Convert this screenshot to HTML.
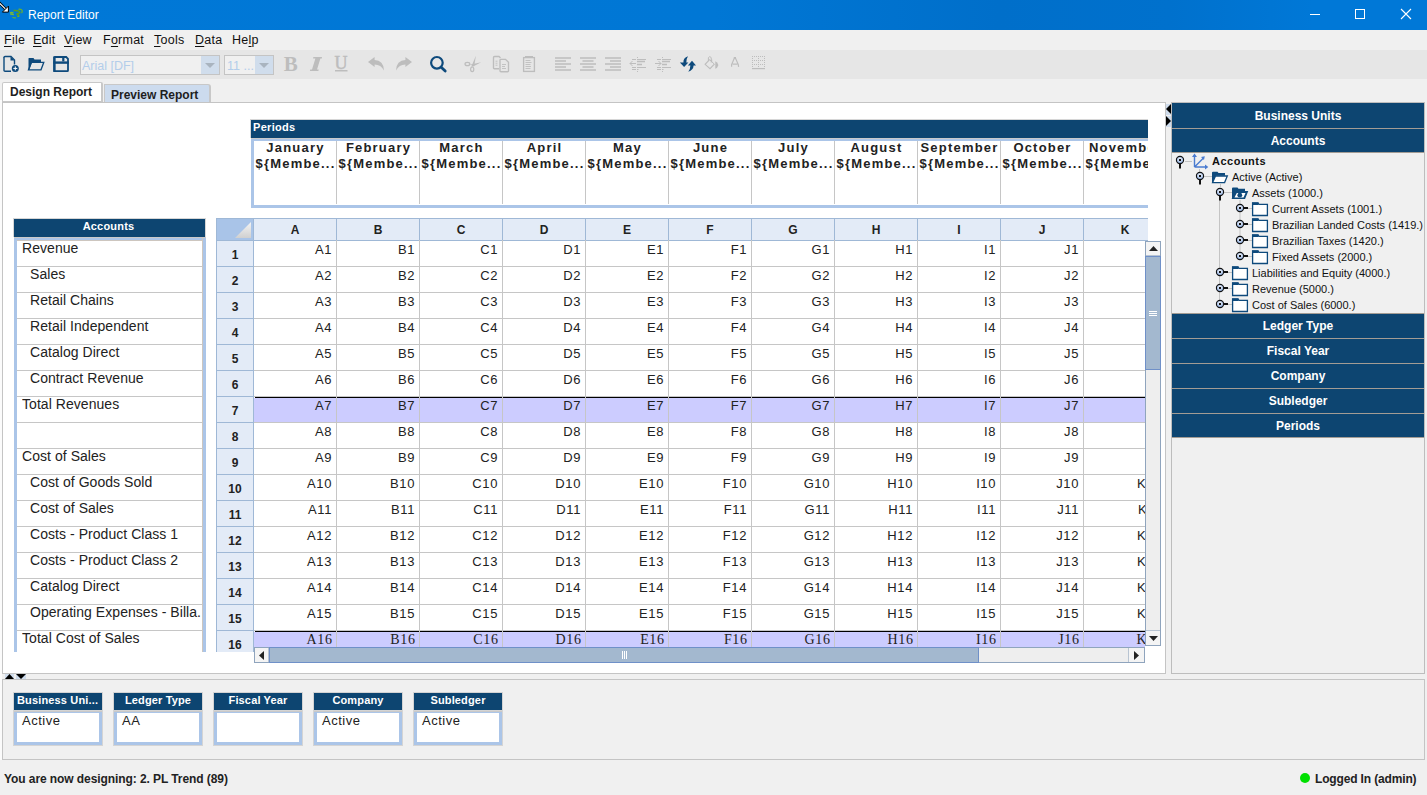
<!DOCTYPE html><html><head><meta charset="utf-8"><title>Report Editor</title><style>
*{margin:0;padding:0;box-sizing:border-box}
html,body{width:1427px;height:795px;overflow:hidden;background:#f0f0f0;font-family:"Liberation Sans",sans-serif;position:relative}
div{position:absolute}
.t{white-space:nowrap;line-height:15px;color:#222}
.clip{overflow:hidden}
u{text-decoration:underline;text-decoration-thickness:1px;text-underline-offset:2px}
</style></head><body><div style="position:absolute;left:0px;top:0px;width:1427px;height:30px;background:linear-gradient(90deg,#0078d7 0%,#0077d5 50%,#006fca 70%,#0071cd 82%,#0078d7 92%)"></div>
<div class="t" style="left:28px;top:8px;font-size:12px;color:#fff;line-height:14px">Report Editor</div>
<svg style="position:absolute;left:9px;top:8px" width="15" height="12" viewBox="0 0 15 12">
<path d="M9.5 1.3 Q13 0.8 13.2 3 Q13.3 4.5 12.5 5" fill="none" stroke="#6ab42a" stroke-width="1.2"/>
<path d="M4.5 2.6 Q8 2 10.5 3.6 Q11.5 4.6 9.5 5.6 L7.5 6 Q10 6.6 8.8 8.6" fill="none" stroke="#5c9e1e" stroke-width="1.6"/>
<path d="M1 4.8 Q3 4.2 4.5 5 M1.2 6 L5 6.6" fill="none" stroke="#78b83a" stroke-width="1.4"/>
<path d="M3.5 9.2 Q5 10.2 6.8 9.6 M8.5 8.8 L10.5 7.8" fill="none" stroke="#6ab42a" stroke-width="1.2"/>
</svg>
<svg style="position:absolute;left:0px;top:0px" width="12" height="14" viewBox="0 0 12 14">
<path d="M-1 2.6 L5.6 9.2" stroke="#000" stroke-width="2.8"/>
<path d="M-1 2.6 L5.6 9.2" stroke="#fff" stroke-width="1.1"/>
<path d="M8.4 6.1 L8.4 12.1 L2.4 12.1 Z" fill="#fff" stroke="#000" stroke-width="1.0" stroke-linejoin="round"/>
</svg>
<div style="position:absolute;left:1310px;top:14px;width:10px;height:1px;background:#fff"></div>
<div style="position:absolute;left:1355px;top:9px;width:10px;height:10px;border:1px solid #fff"></div>
<svg style="position:absolute;left:1400px;top:8px" width="12" height="12" viewBox="0 0 12 12">
<path d="M1 1 L11 11 M11 1 L1 11" stroke="#fff" stroke-width="1.1"/></svg>
<div class="t" style="left:4px;top:33px;font-size:12.5px;letter-spacing:0.25px;color:#111;line-height:14px"><u>F</u>ile</div>
<div class="t" style="left:33px;top:33px;font-size:12.5px;letter-spacing:0.25px;color:#111;line-height:14px"><u>E</u>dit</div>
<div class="t" style="left:64px;top:33px;font-size:12.5px;letter-spacing:0.25px;color:#111;line-height:14px"><u>V</u>iew</div>
<div class="t" style="left:103px;top:33px;font-size:12.5px;letter-spacing:0.25px;color:#111;line-height:14px">F<u>o</u>rmat</div>
<div class="t" style="left:154px;top:33px;font-size:12.5px;letter-spacing:0.25px;color:#111;line-height:14px"><u>T</u>ools</div>
<div class="t" style="left:195px;top:33px;font-size:12.5px;letter-spacing:0.25px;color:#111;line-height:14px"><u>D</u>ata</div>
<div class="t" style="left:232px;top:33px;font-size:12.5px;letter-spacing:0.25px;color:#111;line-height:14px">He<u>l</u>p</div>
<div style="position:absolute;left:0px;top:50px;width:1427px;height:29px;background:#e6e6e6"></div>
<div style="position:absolute;left:80px;top:55px;width:140px;height:20px;background:#f0f0f0;border:1px solid #c4c4c4"></div>
<div style="position:absolute;left:201px;top:56px;width:18px;height:18px;background:#d0ddec"></div>
<svg style="position:absolute;left:205px;top:63px" width="10" height="6"><path d="M0 0 L10 0 L5 5 Z" fill="#a9b4bf"/></svg>
<div class="t" style="left:82px;top:59px;font-size:12.5px;color:#b3cdea">Arial [DF]</div>
<div style="position:absolute;left:224px;top:55px;width:50px;height:20px;background:#f0f0f0;border:1px solid #c4c4c4"></div>
<div style="position:absolute;left:255px;top:56px;width:18px;height:18px;background:#d0ddec"></div>
<svg style="position:absolute;left:259px;top:63px" width="10" height="6"><path d="M0 0 L10 0 L5 5 Z" fill="#a9b4bf"/></svg>
<div class="t" style="left:227px;top:59px;font-size:12.5px;color:#b3cdea">11 ...</div>
<svg style="position:absolute;left:0;top:50px" width="780" height="29" viewBox="0 50 780 29">
<!-- new doc -->
<path d="M4 57.5 Q4 56.5 5 56.5 L11 56.5 L14.5 60 L14.5 64.5" fill="none" stroke="#0e4a7c" stroke-width="1.4"/>
<path d="M4 57 L4 70.5 Q4 71.2 5 71.2 L11 71.2" fill="none" stroke="#0e4a7c" stroke-width="1.4"/>
<path d="M10.5 56.5 L10.5 60.5 L14.5 60.5 Z" fill="#0e4a7c"/>
<circle cx="15.3" cy="68.4" r="3.5" fill="#0e4a7c"/>
<path d="M15.3 66.4 L15.3 70.4 M13.3 68.4 L17.3 68.4" stroke="#fff" stroke-width="1"/>
<!-- open folder -->
<path d="M28.5 58.5 Q28.5 58 29 58 L33.5 58 L34.5 59.5 L41 59.5 L41 62 L32 62 L29.5 69.5 L28.5 69.5 Z" fill="#0e4a7c"/>
<path d="M28.5 69.8 L31.5 62.3 L43.8 62.3 L41 69.8 Z" fill="none" stroke="#0e4a7c" stroke-width="1.3"/>
<!-- save -->
<path d="M54.2 57.6 Q54.2 57 54.8 57 L66.2 57 L68 58.8 L68 70.6 Q68 71.2 67.4 71.2 L54.8 71.2 Q54.2 71.2 54.2 70.6 Z" fill="none" stroke="#0e4a7c" stroke-width="1.8"/>
<rect x="53.3" y="56.5" width="2.3" height="15.5" fill="#0e4a7c"/>
<rect x="53.3" y="61.4" width="15.6" height="2.4" fill="#0e4a7c"/>
<rect x="62.2" y="57" width="2.2" height="4.4" fill="#0e4a7c"/>
<!-- B I U -->
<text x="283.8" y="71" font-family="Liberation Serif" font-weight="bold" font-size="20.5" fill="#bdbdbd" textLength="14" lengthAdjust="spacingAndGlyphs">B</text>
<path d="M313.3 57 L322 57 L321.8 58.6 L320.4 58.6 L317 69.4 L318.7 69.4 L318.4 71 L309.9 71 L310.2 69.4 L312 69.4 L315.4 58.6 L313.1 58.6 Z" fill="#bdbdbd"/>
<text x="334.6" y="69" font-family="Liberation Serif" font-size="18" stroke="#bdbdbd" stroke-width="0.5" fill="#bdbdbd">U</text>
<rect x="335" y="70" width="12.5" height="1.5" fill="#bdbdbd"/>
<!-- undo -->
<path d="M368 62 L374.6 57 L374.6 60 Q383.5 60 384 70.5 Q381 64.5 374.6 64.5 L374.6 67 Z" fill="#bdbdbd"/>
<!-- redo -->
<path d="M412 62 L405.4 57 L405.4 60 Q396.5 60 396 70.5 Q399 64.5 405.4 64.5 L405.4 67 Z" fill="#bdbdbd"/>
<!-- search -->
<circle cx="436.9" cy="62.8" r="5.8" fill="none" stroke="#0e4a7c" stroke-width="2.2"/>
<path d="M441.2 67.2 L445.2 71" stroke="#0e4a7c" stroke-width="2.8" stroke-linecap="round"/>
<!-- cut -->
<ellipse cx="467.4" cy="64" rx="2.4" ry="1.7" fill="none" stroke="#bdbdbd" stroke-width="1.2"/>
<ellipse cx="472.2" cy="69.3" rx="1.6" ry="2.3" fill="none" stroke="#bdbdbd" stroke-width="1.2"/>
<path d="M471.3 66.8 L475.9 55.8 L474.2 66.2 Z" fill="#bdbdbd"/>
<path d="M469.6 64.8 L481.2 62.2 L474.5 65.8 Z" fill="#bdbdbd"/>
<!-- copy -->
<path d="M500.5 58 L499 56.5 L494.5 56.5 Q493.5 56.5 493.5 57.5 L493.5 68 Q493.5 68.7 494.5 68.7 L499 68.7" fill="none" stroke="#bdbdbd" stroke-width="1.35"/>
<path d="M495.5 61.2 L497.5 61.2 M495.5 63.2 L497.5 63.2 M495.5 65.2 L497.5 65.2" stroke="#bdbdbd" stroke-width="0.9"/>
<path d="M500 60 Q500 59.3 501 59.3 L505.5 59.3 L508.5 62.3 L508.5 71 Q508.5 71.7 507.5 71.7 L501 71.7 Q500 71.7 500 71 Z" fill="none" stroke="#bdbdbd" stroke-width="1.35"/>
<path d="M502 64.5 L506 64.5 M502 66.5 L505 66.5 M502 68.5 L506 68.5" stroke="#bdbdbd" stroke-width="0.9"/>
<!-- paste -->
<rect x="523.6" y="57.6" width="10.8" height="13.8" fill="none" stroke="#bdbdbd" stroke-width="1.35"/>
<rect x="525" y="56" width="8" height="2" fill="#bdbdbd"/>
<path d="M525.5 60.5 L530.5 60.5 M525.5 62.5 L531.5 62.5 M525.5 64.5 L530.5 64.5 M525.5 66.5 L531 66.5 M525.5 68.5 L530.5 68.5" stroke="#bdbdbd" stroke-width="0.9"/>
<!-- align left -->
<path d="M555 58 L571 58 M555 61 L566 61 M555 64 L571 64 M555 67 L566 67 M555 70 L571 70" stroke="#bdbdbd" stroke-width="1.6"/>
<!-- align center -->
<path d="M580 58 L596 58 M582.5 61 L593.5 61 M580 64 L596 64 M582.5 67 L593.5 67 M580 70 L596 70" stroke="#bdbdbd" stroke-width="1.6"/>
<!-- align right -->
<path d="M605 58 L621 58 M610 61 L621 61 M605 64 L621 64 M610 67 L621 67 M605 70 L621 70" stroke="#bdbdbd" stroke-width="1.6"/>
<!-- outdent -->
<path d="M632 59.5 L636 59.5 M632 67.5 L636 67.5 M632 69.5 L636 69.5 M637 59.5 L646 59.5 M637 67.5 L646 67.5 M637 69.5 L638.5 69.5" stroke="#bdbdbd" stroke-width="1"/>
<path d="M637 61.5 L645 61.5 M637 64.5 L642 64.5" stroke="#bdbdbd" stroke-width="1.6"/>
<path d="M630 63.5 L636 63.5 M632.5 61 L630 63.5 L632.5 66" fill="none" stroke="#bdbdbd" stroke-width="1"/>
<path d="M637.5 57 L637.5 58 M637.5 71 L637.5 72" stroke="#bdbdbd" stroke-width="1"/>
<!-- indent -->
<path d="M657 59.5 L661 59.5 M657 67.5 L661 67.5 M657 69.5 L661 69.5 M662 59.5 L671 59.5 M662 67.5 L671 67.5 M662 69.5 L663.5 69.5" stroke="#bdbdbd" stroke-width="1"/>
<path d="M662 61.5 L670 61.5 M662 64.5 L667 64.5" stroke="#bdbdbd" stroke-width="1.6"/>
<path d="M655 63.5 L661 63.5 M658.5 61 L661 63.5 L658.5 66" fill="none" stroke="#bdbdbd" stroke-width="1"/>
<path d="M662.5 57 L662.5 58 M662.5 71 L662.5 72" stroke="#bdbdbd" stroke-width="1"/>
<!-- refresh -->
<path d="M688 56.2 Q683.2 57.8 683.4 62.4 L679.9 62.4 L684.1 67 L688.4 62.4 L686.3 62.4 Q686.2 58.8 688 56.2 Z" fill="#0e4a7c"/>
<path d="M688.3 71.8 Q693.4 70 693.6 65.5 L696 65.5 L692 60.8 L687.9 65.5 L690.4 65.5 Q690.3 69.4 688.3 71.8 Z" fill="#0e4a7c"/>
<!-- paint bucket -->
<path d="M709.6 59.6 L705.1 64.3 L710 68.7 L714.4 64.2" fill="none" stroke="#bdbdbd" stroke-width="1.1"/>
<path d="M708.4 61 L708.4 57.6 Q709.8 55.6 711.2 57.6 L711.2 62.5" fill="none" stroke="#bdbdbd" stroke-width="1"/>
<path d="M709.6 59.6 L714.4 64.2 M711.7 59.5 L711.7 61.8" fill="none" stroke="#bdbdbd" stroke-width="1"/>
<path d="M715.3 61.3 Q718.6 63.5 718.2 65.5 Q717.5 68 715.3 68.8 Z" fill="#bdbdbd"/>
<!-- A -->
<path d="M731.6 66.8 L731.6 64.6 L734.4 58 L735.4 58 L738.3 64.6 L738.6 66.8 M732.6 64.2 L737.4 64.2" fill="none" stroke="#bdbdbd" stroke-width="1.2"/>
<rect x="733.8" y="57" width="2.2" height="1.6" fill="#bdbdbd"/>
<!-- borders -->
<path d="M752 56.5 L765 56.5 M752 60.5 L765 60.5 M752 64.5 L765 64.5 M752.5 56 L752.5 67 M758.5 56 L758.5 67 M764.5 56 L764.5 67" fill="none" stroke="#bdbdbd" stroke-width="1" stroke-dasharray="1 1"/>
<rect x="752" y="68" width="13" height="1.2" fill="#bdbdbd"/>
</svg>
<div style="position:absolute;left:2px;top:82px;width:101px;height:20px;background:#fff;border:1px solid #c8c8c8;border-right-width:2px;border-radius:2px 2px 0 0"></div>
<div class="t" style="left:10px;top:85px;font-size:12px;font-weight:bold;color:#1e1e1e">Design Report</div>
<div style="position:absolute;left:104px;top:84px;width:107px;height:18px;background:#ccdbee;border:1px solid #c8c8c8;border-bottom:none;border-right-width:2px;border-radius:0 3px 0 0"></div>
<div class="t" style="left:111px;top:88px;font-size:12px;font-weight:bold;color:#1e1e1e">Preview Report</div>
<div style="position:absolute;left:0px;top:100px;width:2px;height:660px;background:#fbfbfb"></div>
<div style="position:absolute;left:2px;top:102px;width:1164px;height:572px;background:#fff;border:1px solid #c4c4c4"></div>
<div class="clip" style="left:250px;top:119px;width:898px;height:89px">
<div style="position:absolute;left:0px;top:0px;width:1000px;height:19px;background:#0d4571;border:1px solid #d6d6d6;border-right:none;border-bottom:none"></div>
<div style="position:absolute;left:1px;top:19px;width:1000px;height:1px;background:#c9c9c9"></div>
<div class="t" style="left:3px;top:2px;font-size:11px;font-weight:bold;letter-spacing:0.3px;color:#fff;line-height:13px">Periods</div>
<div style="position:absolute;left:1px;top:20px;width:1000px;height:69px;background:#fff;border:3px solid #abc5e8;border-right:none;border-top-width:2px"></div>
<div class="t" style="left:4px;top:21px;width:83px;text-align:center;font-size:13px;font-weight:bold;letter-spacing:1.2px;color:#222;line-height:16px">January</div>
<div class="t" style="left:4px;top:37px;width:83px;text-align:center;font-size:13px;font-weight:bold;letter-spacing:1.2px;color:#222;line-height:16px">${Membe...</div>
<div style="position:absolute;left:86px;top:22px;width:1px;height:63px;background:#c6c6c6"></div>
<div class="t" style="left:87px;top:21px;width:83px;text-align:center;font-size:13px;font-weight:bold;letter-spacing:1.2px;color:#222;line-height:16px">February</div>
<div class="t" style="left:87px;top:37px;width:83px;text-align:center;font-size:13px;font-weight:bold;letter-spacing:1.2px;color:#222;line-height:16px">${Membe...</div>
<div style="position:absolute;left:169px;top:22px;width:1px;height:63px;background:#c6c6c6"></div>
<div class="t" style="left:170px;top:21px;width:83px;text-align:center;font-size:13px;font-weight:bold;letter-spacing:1.2px;color:#222;line-height:16px">March</div>
<div class="t" style="left:170px;top:37px;width:83px;text-align:center;font-size:13px;font-weight:bold;letter-spacing:1.2px;color:#222;line-height:16px">${Membe...</div>
<div style="position:absolute;left:252px;top:22px;width:1px;height:63px;background:#c6c6c6"></div>
<div class="t" style="left:253px;top:21px;width:83px;text-align:center;font-size:13px;font-weight:bold;letter-spacing:1.2px;color:#222;line-height:16px">April</div>
<div class="t" style="left:253px;top:37px;width:83px;text-align:center;font-size:13px;font-weight:bold;letter-spacing:1.2px;color:#222;line-height:16px">${Membe...</div>
<div style="position:absolute;left:335px;top:22px;width:1px;height:63px;background:#c6c6c6"></div>
<div class="t" style="left:336px;top:21px;width:83px;text-align:center;font-size:13px;font-weight:bold;letter-spacing:1.2px;color:#222;line-height:16px">May</div>
<div class="t" style="left:336px;top:37px;width:83px;text-align:center;font-size:13px;font-weight:bold;letter-spacing:1.2px;color:#222;line-height:16px">${Membe...</div>
<div style="position:absolute;left:418px;top:22px;width:1px;height:63px;background:#c6c6c6"></div>
<div class="t" style="left:419px;top:21px;width:83px;text-align:center;font-size:13px;font-weight:bold;letter-spacing:1.2px;color:#222;line-height:16px">June</div>
<div class="t" style="left:419px;top:37px;width:83px;text-align:center;font-size:13px;font-weight:bold;letter-spacing:1.2px;color:#222;line-height:16px">${Membe...</div>
<div style="position:absolute;left:501px;top:22px;width:1px;height:63px;background:#c6c6c6"></div>
<div class="t" style="left:502px;top:21px;width:83px;text-align:center;font-size:13px;font-weight:bold;letter-spacing:1.2px;color:#222;line-height:16px">July</div>
<div class="t" style="left:502px;top:37px;width:83px;text-align:center;font-size:13px;font-weight:bold;letter-spacing:1.2px;color:#222;line-height:16px">${Membe...</div>
<div style="position:absolute;left:584px;top:22px;width:1px;height:63px;background:#c6c6c6"></div>
<div class="t" style="left:585px;top:21px;width:83px;text-align:center;font-size:13px;font-weight:bold;letter-spacing:1.2px;color:#222;line-height:16px">August</div>
<div class="t" style="left:585px;top:37px;width:83px;text-align:center;font-size:13px;font-weight:bold;letter-spacing:1.2px;color:#222;line-height:16px">${Membe...</div>
<div style="position:absolute;left:667px;top:22px;width:1px;height:63px;background:#c6c6c6"></div>
<div class="t" style="left:668px;top:21px;width:83px;text-align:center;font-size:13px;font-weight:bold;letter-spacing:1.2px;color:#222;line-height:16px">September</div>
<div class="t" style="left:668px;top:37px;width:83px;text-align:center;font-size:13px;font-weight:bold;letter-spacing:1.2px;color:#222;line-height:16px">${Membe...</div>
<div style="position:absolute;left:750px;top:22px;width:1px;height:63px;background:#c6c6c6"></div>
<div class="t" style="left:751px;top:21px;width:83px;text-align:center;font-size:13px;font-weight:bold;letter-spacing:1.2px;color:#222;line-height:16px">October</div>
<div class="t" style="left:751px;top:37px;width:83px;text-align:center;font-size:13px;font-weight:bold;letter-spacing:1.2px;color:#222;line-height:16px">${Membe...</div>
<div style="position:absolute;left:833px;top:22px;width:1px;height:63px;background:#c6c6c6"></div>
<div class="t" style="left:834px;top:21px;width:83px;text-align:center;font-size:13px;font-weight:bold;letter-spacing:1.2px;color:#222;line-height:16px">November</div>
<div class="t" style="left:834px;top:37px;width:83px;text-align:center;font-size:13px;font-weight:bold;letter-spacing:1.2px;color:#222;line-height:16px">${Membe...</div>
</div>
<div style="position:absolute;left:13px;top:218px;width:193px;height:19px;background:#0d4571;border:1px solid #d6d6d6;border-bottom:none"></div>
<div class="t" style="left:13px;top:220px;width:191px;text-align:center;font-size:11px;font-weight:bold;letter-spacing:0.2px;color:#fff;line-height:13px">Accounts</div>
<div class="clip" style="left:13px;top:237px;width:193px;height:415px">
<div style="position:absolute;left:1px;top:0px;width:192px;height:1px;background:#c9c9c9"></div>
<div style="position:absolute;left:1px;top:1px;width:192px;height:500px;background:#fff;border:3px solid #abc5e8;border-bottom:none;border-top-width:2px"></div>
<div style="position:absolute;left:4px;top:3px;width:186px;height:1px;background:#cdc6bf"></div>
<div class="t" style="left:9px;top:4px;font-size:14px;letter-spacing:0.05px;color:#222;line-height:15px;overflow:hidden;width:180px">Revenue</div>
<div style="position:absolute;left:4px;top:29px;width:186px;height:1px;background:#c6c6c6"></div>
<div class="t" style="left:17px;top:30px;font-size:14px;letter-spacing:0.05px;color:#222;line-height:15px;overflow:hidden;width:172px">Sales</div>
<div style="position:absolute;left:4px;top:55px;width:186px;height:1px;background:#c6c6c6"></div>
<div class="t" style="left:17px;top:56px;font-size:14px;letter-spacing:0.05px;color:#222;line-height:15px;overflow:hidden;width:172px">Retail Chains</div>
<div style="position:absolute;left:4px;top:81px;width:186px;height:1px;background:#c6c6c6"></div>
<div class="t" style="left:17px;top:82px;font-size:14px;letter-spacing:0.05px;color:#222;line-height:15px;overflow:hidden;width:172px">Retail Independent</div>
<div style="position:absolute;left:4px;top:107px;width:186px;height:1px;background:#c6c6c6"></div>
<div class="t" style="left:17px;top:108px;font-size:14px;letter-spacing:0.05px;color:#222;line-height:15px;overflow:hidden;width:172px">Catalog Direct</div>
<div style="position:absolute;left:4px;top:133px;width:186px;height:1px;background:#c6c6c6"></div>
<div class="t" style="left:17px;top:134px;font-size:14px;letter-spacing:0.05px;color:#222;line-height:15px;overflow:hidden;width:172px">Contract Revenue</div>
<div style="position:absolute;left:4px;top:159px;width:186px;height:1px;background:#c6c6c6"></div>
<div class="t" style="left:9px;top:160px;font-size:14px;letter-spacing:0.05px;color:#222;line-height:15px;overflow:hidden;width:180px">Total Revenues</div>
<div style="position:absolute;left:4px;top:185px;width:186px;height:1px;background:#c6c6c6"></div>
<div class="t" style="left:9px;top:186px;font-size:14px;letter-spacing:0.05px;color:#222;line-height:15px;overflow:hidden;width:180px"></div>
<div style="position:absolute;left:4px;top:211px;width:186px;height:1px;background:#c6c6c6"></div>
<div class="t" style="left:9px;top:212px;font-size:14px;letter-spacing:0.05px;color:#222;line-height:15px;overflow:hidden;width:180px">Cost of Sales</div>
<div style="position:absolute;left:4px;top:237px;width:186px;height:1px;background:#c6c6c6"></div>
<div class="t" style="left:17px;top:238px;font-size:14px;letter-spacing:0.05px;color:#222;line-height:15px;overflow:hidden;width:172px">Cost of Goods Sold</div>
<div style="position:absolute;left:4px;top:263px;width:186px;height:1px;background:#c6c6c6"></div>
<div class="t" style="left:17px;top:264px;font-size:14px;letter-spacing:0.05px;color:#222;line-height:15px;overflow:hidden;width:172px">Cost of Sales</div>
<div style="position:absolute;left:4px;top:289px;width:186px;height:1px;background:#c6c6c6"></div>
<div class="t" style="left:17px;top:290px;font-size:14px;letter-spacing:0.05px;color:#222;line-height:15px;overflow:hidden;width:172px">Costs - Product Class 1</div>
<div style="position:absolute;left:4px;top:315px;width:186px;height:1px;background:#c6c6c6"></div>
<div class="t" style="left:17px;top:316px;font-size:14px;letter-spacing:0.05px;color:#222;line-height:15px;overflow:hidden;width:172px">Costs - Product Class 2</div>
<div style="position:absolute;left:4px;top:341px;width:186px;height:1px;background:#c6c6c6"></div>
<div class="t" style="left:17px;top:342px;font-size:14px;letter-spacing:0.05px;color:#222;line-height:15px;overflow:hidden;width:172px">Catalog Direct</div>
<div style="position:absolute;left:4px;top:367px;width:186px;height:1px;background:#c6c6c6"></div>
<div class="t" style="left:17px;top:368px;font-size:14px;letter-spacing:0.05px;color:#222;line-height:15px;overflow:hidden;width:172px">Operating Expenses - Billa.</div>
<div style="position:absolute;left:4px;top:393px;width:186px;height:1px;background:#c6c6c6"></div>
<div class="t" style="left:9px;top:394px;font-size:14px;letter-spacing:0.05px;color:#222;line-height:15px;overflow:hidden;width:180px">Total Cost of Sales</div>
<div style="position:absolute;left:189px;top:0px;width:1px;height:500px;background:#cdc6bf"></div>
</div>
<div style="position:absolute;left:216px;top:218px;width:38px;height:23px;background:#a9c4e8;border:1px solid #9fb8d6"></div>
<svg style="position:absolute;left:235px;top:222px" width="17" height="16"><defs><linearGradient id="cg" x1="0" y1="0" x2="0" y2="1"><stop offset="0" stop-color="#f4f4f4"/><stop offset="1" stop-color="#d0d0d0"/></linearGradient></defs><path d="M16 0 L16 16 L0 16 Z" fill="url(#cg)"/></svg>
<div class="clip" style="left:253px;top:218px;width:895px;height:23px">
<div style="position:absolute;left:0px;top:0px;width:84px;height:23px;background:#e3ebf7;border:1px solid #9fb8d6"></div>
<div class="t" style="left:0px;top:5px;width:84px;text-align:center;font-size:12px;font-weight:bold;color:#222;line-height:14px">A</div>
<div style="position:absolute;left:83px;top:0px;width:84px;height:23px;background:#e3ebf7;border:1px solid #9fb8d6"></div>
<div class="t" style="left:83px;top:5px;width:84px;text-align:center;font-size:12px;font-weight:bold;color:#222;line-height:14px">B</div>
<div style="position:absolute;left:166px;top:0px;width:84px;height:23px;background:#e3ebf7;border:1px solid #9fb8d6"></div>
<div class="t" style="left:166px;top:5px;width:84px;text-align:center;font-size:12px;font-weight:bold;color:#222;line-height:14px">C</div>
<div style="position:absolute;left:249px;top:0px;width:84px;height:23px;background:#e3ebf7;border:1px solid #9fb8d6"></div>
<div class="t" style="left:249px;top:5px;width:84px;text-align:center;font-size:12px;font-weight:bold;color:#222;line-height:14px">D</div>
<div style="position:absolute;left:332px;top:0px;width:84px;height:23px;background:#e3ebf7;border:1px solid #9fb8d6"></div>
<div class="t" style="left:332px;top:5px;width:84px;text-align:center;font-size:12px;font-weight:bold;color:#222;line-height:14px">E</div>
<div style="position:absolute;left:415px;top:0px;width:84px;height:23px;background:#e3ebf7;border:1px solid #9fb8d6"></div>
<div class="t" style="left:415px;top:5px;width:84px;text-align:center;font-size:12px;font-weight:bold;color:#222;line-height:14px">F</div>
<div style="position:absolute;left:498px;top:0px;width:84px;height:23px;background:#e3ebf7;border:1px solid #9fb8d6"></div>
<div class="t" style="left:498px;top:5px;width:84px;text-align:center;font-size:12px;font-weight:bold;color:#222;line-height:14px">G</div>
<div style="position:absolute;left:581px;top:0px;width:84px;height:23px;background:#e3ebf7;border:1px solid #9fb8d6"></div>
<div class="t" style="left:581px;top:5px;width:84px;text-align:center;font-size:12px;font-weight:bold;color:#222;line-height:14px">H</div>
<div style="position:absolute;left:664px;top:0px;width:84px;height:23px;background:#e3ebf7;border:1px solid #9fb8d6"></div>
<div class="t" style="left:664px;top:5px;width:84px;text-align:center;font-size:12px;font-weight:bold;color:#222;line-height:14px">I</div>
<div style="position:absolute;left:747px;top:0px;width:84px;height:23px;background:#e3ebf7;border:1px solid #9fb8d6"></div>
<div class="t" style="left:747px;top:5px;width:84px;text-align:center;font-size:12px;font-weight:bold;color:#222;line-height:14px">J</div>
<div style="position:absolute;left:830px;top:0px;width:84px;height:23px;background:#e3ebf7;border:1px solid #9fb8d6"></div>
<div class="t" style="left:830px;top:5px;width:84px;text-align:center;font-size:12px;font-weight:bold;color:#222;line-height:14px">K</div>
</div>
<div class="clip" style="left:216px;top:240px;width:38px;height:412px">
<div style="position:absolute;left:0px;top:0px;width:38px;height:27px;background:#e3ebf7;border:1px solid #9fb8d6"></div>
<div class="t" style="left:0px;top:8px;width:38px;text-align:center;font-size:12px;font-weight:bold;color:#222;line-height:14px">1</div>
<div style="position:absolute;left:0px;top:26px;width:38px;height:27px;background:#e3ebf7;border:1px solid #9fb8d6"></div>
<div class="t" style="left:0px;top:34px;width:38px;text-align:center;font-size:12px;font-weight:bold;color:#222;line-height:14px">2</div>
<div style="position:absolute;left:0px;top:52px;width:38px;height:27px;background:#e3ebf7;border:1px solid #9fb8d6"></div>
<div class="t" style="left:0px;top:60px;width:38px;text-align:center;font-size:12px;font-weight:bold;color:#222;line-height:14px">3</div>
<div style="position:absolute;left:0px;top:78px;width:38px;height:27px;background:#e3ebf7;border:1px solid #9fb8d6"></div>
<div class="t" style="left:0px;top:86px;width:38px;text-align:center;font-size:12px;font-weight:bold;color:#222;line-height:14px">4</div>
<div style="position:absolute;left:0px;top:104px;width:38px;height:27px;background:#e3ebf7;border:1px solid #9fb8d6"></div>
<div class="t" style="left:0px;top:112px;width:38px;text-align:center;font-size:12px;font-weight:bold;color:#222;line-height:14px">5</div>
<div style="position:absolute;left:0px;top:130px;width:38px;height:27px;background:#e3ebf7;border:1px solid #9fb8d6"></div>
<div class="t" style="left:0px;top:138px;width:38px;text-align:center;font-size:12px;font-weight:bold;color:#222;line-height:14px">6</div>
<div style="position:absolute;left:0px;top:156px;width:38px;height:27px;background:#e3ebf7;border:1px solid #9fb8d6"></div>
<div class="t" style="left:0px;top:164px;width:38px;text-align:center;font-size:12px;font-weight:bold;color:#222;line-height:14px">7</div>
<div style="position:absolute;left:0px;top:182px;width:38px;height:27px;background:#e3ebf7;border:1px solid #9fb8d6"></div>
<div class="t" style="left:0px;top:190px;width:38px;text-align:center;font-size:12px;font-weight:bold;color:#222;line-height:14px">8</div>
<div style="position:absolute;left:0px;top:208px;width:38px;height:27px;background:#e3ebf7;border:1px solid #9fb8d6"></div>
<div class="t" style="left:0px;top:216px;width:38px;text-align:center;font-size:12px;font-weight:bold;color:#222;line-height:14px">9</div>
<div style="position:absolute;left:0px;top:234px;width:38px;height:27px;background:#e3ebf7;border:1px solid #9fb8d6"></div>
<div class="t" style="left:0px;top:242px;width:38px;text-align:center;font-size:12px;font-weight:bold;color:#222;line-height:14px">10</div>
<div style="position:absolute;left:0px;top:260px;width:38px;height:27px;background:#e3ebf7;border:1px solid #9fb8d6"></div>
<div class="t" style="left:0px;top:268px;width:38px;text-align:center;font-size:12px;font-weight:bold;color:#222;line-height:14px">11</div>
<div style="position:absolute;left:0px;top:286px;width:38px;height:27px;background:#e3ebf7;border:1px solid #9fb8d6"></div>
<div class="t" style="left:0px;top:294px;width:38px;text-align:center;font-size:12px;font-weight:bold;color:#222;line-height:14px">12</div>
<div style="position:absolute;left:0px;top:312px;width:38px;height:27px;background:#e3ebf7;border:1px solid #9fb8d6"></div>
<div class="t" style="left:0px;top:320px;width:38px;text-align:center;font-size:12px;font-weight:bold;color:#222;line-height:14px">13</div>
<div style="position:absolute;left:0px;top:338px;width:38px;height:27px;background:#e3ebf7;border:1px solid #9fb8d6"></div>
<div class="t" style="left:0px;top:346px;width:38px;text-align:center;font-size:12px;font-weight:bold;color:#222;line-height:14px">14</div>
<div style="position:absolute;left:0px;top:364px;width:38px;height:27px;background:#e3ebf7;border:1px solid #9fb8d6"></div>
<div class="t" style="left:0px;top:372px;width:38px;text-align:center;font-size:12px;font-weight:bold;color:#222;line-height:14px">15</div>
<div style="position:absolute;left:0px;top:390px;width:38px;height:27px;background:#e3ebf7;border:1px solid #9fb8d6"></div>
<div class="t" style="left:0px;top:398px;width:38px;text-align:center;font-size:12px;font-weight:bold;color:#222;line-height:14px">16</div>
</div>
<div class="clip" style="left:254px;top:240px;width:891px;height:407px">
<div style="position:absolute;left:0px;top:26px;width:1000px;height:1px;background:#c6c6c6"></div>
<div style="position:absolute;left:0px;top:52px;width:1000px;height:1px;background:#c6c6c6"></div>
<div style="position:absolute;left:0px;top:78px;width:1000px;height:1px;background:#c6c6c6"></div>
<div style="position:absolute;left:0px;top:104px;width:1000px;height:1px;background:#c6c6c6"></div>
<div style="position:absolute;left:0px;top:130px;width:1000px;height:1px;background:#c6c6c6"></div>
<div style="position:absolute;left:0px;top:156px;width:1000px;height:1px;background:#c6c6c6"></div>
<div style="position:absolute;left:0px;top:158px;width:1000px;height:24px;background:#ccccff"></div>
<div style="position:absolute;left:1px;top:157px;width:1000px;height:1px;background:#000"></div>
<div style="position:absolute;left:0px;top:182px;width:1000px;height:1px;background:#c6c6c6"></div>
<div style="position:absolute;left:0px;top:208px;width:1000px;height:1px;background:#c6c6c6"></div>
<div style="position:absolute;left:0px;top:234px;width:1000px;height:1px;background:#c6c6c6"></div>
<div style="position:absolute;left:0px;top:260px;width:1000px;height:1px;background:#c6c6c6"></div>
<div style="position:absolute;left:0px;top:286px;width:1000px;height:1px;background:#c6c6c6"></div>
<div style="position:absolute;left:0px;top:312px;width:1000px;height:1px;background:#c6c6c6"></div>
<div style="position:absolute;left:0px;top:338px;width:1000px;height:1px;background:#c6c6c6"></div>
<div style="position:absolute;left:0px;top:364px;width:1000px;height:1px;background:#c6c6c6"></div>
<div style="position:absolute;left:0px;top:390px;width:1000px;height:1px;background:#c6c6c6"></div>
<div style="position:absolute;left:0px;top:392px;width:1000px;height:24px;background:#ccccff"></div>
<div style="position:absolute;left:1px;top:391px;width:1000px;height:1px;background:#000"></div>
<div style="position:absolute;left:82px;top:0px;width:1px;height:420px;background:#c6c6c6"></div>
<div style="position:absolute;left:165px;top:0px;width:1px;height:420px;background:#c6c6c6"></div>
<div style="position:absolute;left:248px;top:0px;width:1px;height:420px;background:#c6c6c6"></div>
<div style="position:absolute;left:331px;top:0px;width:1px;height:420px;background:#c6c6c6"></div>
<div style="position:absolute;left:414px;top:0px;width:1px;height:420px;background:#c6c6c6"></div>
<div style="position:absolute;left:497px;top:0px;width:1px;height:420px;background:#c6c6c6"></div>
<div style="position:absolute;left:580px;top:0px;width:1px;height:420px;background:#c6c6c6"></div>
<div style="position:absolute;left:663px;top:0px;width:1px;height:420px;background:#c6c6c6"></div>
<div style="position:absolute;left:746px;top:0px;width:1px;height:420px;background:#c6c6c6"></div>
<div style="position:absolute;left:829px;top:0px;width:1px;height:420px;background:#c6c6c6"></div>
<div class="t" style="left:0px;top:2px;width:82px;text-align:right;font-size:13px;letter-spacing:0.6px;color:#222;line-height:15px;padding-right:4px">A1</div>
<div class="t" style="left:83px;top:2px;width:82px;text-align:right;font-size:13px;letter-spacing:0.6px;color:#222;line-height:15px;padding-right:4px">B1</div>
<div class="t" style="left:166px;top:2px;width:82px;text-align:right;font-size:13px;letter-spacing:0.6px;color:#222;line-height:15px;padding-right:4px">C1</div>
<div class="t" style="left:249px;top:2px;width:82px;text-align:right;font-size:13px;letter-spacing:0.6px;color:#222;line-height:15px;padding-right:4px">D1</div>
<div class="t" style="left:332px;top:2px;width:82px;text-align:right;font-size:13px;letter-spacing:0.6px;color:#222;line-height:15px;padding-right:4px">E1</div>
<div class="t" style="left:415px;top:2px;width:82px;text-align:right;font-size:13px;letter-spacing:0.6px;color:#222;line-height:15px;padding-right:4px">F1</div>
<div class="t" style="left:498px;top:2px;width:82px;text-align:right;font-size:13px;letter-spacing:0.6px;color:#222;line-height:15px;padding-right:4px">G1</div>
<div class="t" style="left:581px;top:2px;width:82px;text-align:right;font-size:13px;letter-spacing:0.6px;color:#222;line-height:15px;padding-right:4px">H1</div>
<div class="t" style="left:664px;top:2px;width:82px;text-align:right;font-size:13px;letter-spacing:0.6px;color:#222;line-height:15px;padding-right:4px">I1</div>
<div class="t" style="left:747px;top:2px;width:82px;text-align:right;font-size:13px;letter-spacing:0.6px;color:#222;line-height:15px;padding-right:4px">J1</div>
<div class="t" style="left:830px;top:2px;width:82px;text-align:right;font-size:13px;letter-spacing:0.6px;color:#222;line-height:15px;padding-right:4px">K1</div>
<div class="t" style="left:0px;top:28px;width:82px;text-align:right;font-size:13px;letter-spacing:0.6px;color:#222;line-height:15px;padding-right:4px">A2</div>
<div class="t" style="left:83px;top:28px;width:82px;text-align:right;font-size:13px;letter-spacing:0.6px;color:#222;line-height:15px;padding-right:4px">B2</div>
<div class="t" style="left:166px;top:28px;width:82px;text-align:right;font-size:13px;letter-spacing:0.6px;color:#222;line-height:15px;padding-right:4px">C2</div>
<div class="t" style="left:249px;top:28px;width:82px;text-align:right;font-size:13px;letter-spacing:0.6px;color:#222;line-height:15px;padding-right:4px">D2</div>
<div class="t" style="left:332px;top:28px;width:82px;text-align:right;font-size:13px;letter-spacing:0.6px;color:#222;line-height:15px;padding-right:4px">E2</div>
<div class="t" style="left:415px;top:28px;width:82px;text-align:right;font-size:13px;letter-spacing:0.6px;color:#222;line-height:15px;padding-right:4px">F2</div>
<div class="t" style="left:498px;top:28px;width:82px;text-align:right;font-size:13px;letter-spacing:0.6px;color:#222;line-height:15px;padding-right:4px">G2</div>
<div class="t" style="left:581px;top:28px;width:82px;text-align:right;font-size:13px;letter-spacing:0.6px;color:#222;line-height:15px;padding-right:4px">H2</div>
<div class="t" style="left:664px;top:28px;width:82px;text-align:right;font-size:13px;letter-spacing:0.6px;color:#222;line-height:15px;padding-right:4px">I2</div>
<div class="t" style="left:747px;top:28px;width:82px;text-align:right;font-size:13px;letter-spacing:0.6px;color:#222;line-height:15px;padding-right:4px">J2</div>
<div class="t" style="left:830px;top:28px;width:82px;text-align:right;font-size:13px;letter-spacing:0.6px;color:#222;line-height:15px;padding-right:4px">K2</div>
<div class="t" style="left:0px;top:54px;width:82px;text-align:right;font-size:13px;letter-spacing:0.6px;color:#222;line-height:15px;padding-right:4px">A3</div>
<div class="t" style="left:83px;top:54px;width:82px;text-align:right;font-size:13px;letter-spacing:0.6px;color:#222;line-height:15px;padding-right:4px">B3</div>
<div class="t" style="left:166px;top:54px;width:82px;text-align:right;font-size:13px;letter-spacing:0.6px;color:#222;line-height:15px;padding-right:4px">C3</div>
<div class="t" style="left:249px;top:54px;width:82px;text-align:right;font-size:13px;letter-spacing:0.6px;color:#222;line-height:15px;padding-right:4px">D3</div>
<div class="t" style="left:332px;top:54px;width:82px;text-align:right;font-size:13px;letter-spacing:0.6px;color:#222;line-height:15px;padding-right:4px">E3</div>
<div class="t" style="left:415px;top:54px;width:82px;text-align:right;font-size:13px;letter-spacing:0.6px;color:#222;line-height:15px;padding-right:4px">F3</div>
<div class="t" style="left:498px;top:54px;width:82px;text-align:right;font-size:13px;letter-spacing:0.6px;color:#222;line-height:15px;padding-right:4px">G3</div>
<div class="t" style="left:581px;top:54px;width:82px;text-align:right;font-size:13px;letter-spacing:0.6px;color:#222;line-height:15px;padding-right:4px">H3</div>
<div class="t" style="left:664px;top:54px;width:82px;text-align:right;font-size:13px;letter-spacing:0.6px;color:#222;line-height:15px;padding-right:4px">I3</div>
<div class="t" style="left:747px;top:54px;width:82px;text-align:right;font-size:13px;letter-spacing:0.6px;color:#222;line-height:15px;padding-right:4px">J3</div>
<div class="t" style="left:830px;top:54px;width:82px;text-align:right;font-size:13px;letter-spacing:0.6px;color:#222;line-height:15px;padding-right:4px">K3</div>
<div class="t" style="left:0px;top:80px;width:82px;text-align:right;font-size:13px;letter-spacing:0.6px;color:#222;line-height:15px;padding-right:4px">A4</div>
<div class="t" style="left:83px;top:80px;width:82px;text-align:right;font-size:13px;letter-spacing:0.6px;color:#222;line-height:15px;padding-right:4px">B4</div>
<div class="t" style="left:166px;top:80px;width:82px;text-align:right;font-size:13px;letter-spacing:0.6px;color:#222;line-height:15px;padding-right:4px">C4</div>
<div class="t" style="left:249px;top:80px;width:82px;text-align:right;font-size:13px;letter-spacing:0.6px;color:#222;line-height:15px;padding-right:4px">D4</div>
<div class="t" style="left:332px;top:80px;width:82px;text-align:right;font-size:13px;letter-spacing:0.6px;color:#222;line-height:15px;padding-right:4px">E4</div>
<div class="t" style="left:415px;top:80px;width:82px;text-align:right;font-size:13px;letter-spacing:0.6px;color:#222;line-height:15px;padding-right:4px">F4</div>
<div class="t" style="left:498px;top:80px;width:82px;text-align:right;font-size:13px;letter-spacing:0.6px;color:#222;line-height:15px;padding-right:4px">G4</div>
<div class="t" style="left:581px;top:80px;width:82px;text-align:right;font-size:13px;letter-spacing:0.6px;color:#222;line-height:15px;padding-right:4px">H4</div>
<div class="t" style="left:664px;top:80px;width:82px;text-align:right;font-size:13px;letter-spacing:0.6px;color:#222;line-height:15px;padding-right:4px">I4</div>
<div class="t" style="left:747px;top:80px;width:82px;text-align:right;font-size:13px;letter-spacing:0.6px;color:#222;line-height:15px;padding-right:4px">J4</div>
<div class="t" style="left:830px;top:80px;width:82px;text-align:right;font-size:13px;letter-spacing:0.6px;color:#222;line-height:15px;padding-right:4px">K4</div>
<div class="t" style="left:0px;top:106px;width:82px;text-align:right;font-size:13px;letter-spacing:0.6px;color:#222;line-height:15px;padding-right:4px">A5</div>
<div class="t" style="left:83px;top:106px;width:82px;text-align:right;font-size:13px;letter-spacing:0.6px;color:#222;line-height:15px;padding-right:4px">B5</div>
<div class="t" style="left:166px;top:106px;width:82px;text-align:right;font-size:13px;letter-spacing:0.6px;color:#222;line-height:15px;padding-right:4px">C5</div>
<div class="t" style="left:249px;top:106px;width:82px;text-align:right;font-size:13px;letter-spacing:0.6px;color:#222;line-height:15px;padding-right:4px">D5</div>
<div class="t" style="left:332px;top:106px;width:82px;text-align:right;font-size:13px;letter-spacing:0.6px;color:#222;line-height:15px;padding-right:4px">E5</div>
<div class="t" style="left:415px;top:106px;width:82px;text-align:right;font-size:13px;letter-spacing:0.6px;color:#222;line-height:15px;padding-right:4px">F5</div>
<div class="t" style="left:498px;top:106px;width:82px;text-align:right;font-size:13px;letter-spacing:0.6px;color:#222;line-height:15px;padding-right:4px">G5</div>
<div class="t" style="left:581px;top:106px;width:82px;text-align:right;font-size:13px;letter-spacing:0.6px;color:#222;line-height:15px;padding-right:4px">H5</div>
<div class="t" style="left:664px;top:106px;width:82px;text-align:right;font-size:13px;letter-spacing:0.6px;color:#222;line-height:15px;padding-right:4px">I5</div>
<div class="t" style="left:747px;top:106px;width:82px;text-align:right;font-size:13px;letter-spacing:0.6px;color:#222;line-height:15px;padding-right:4px">J5</div>
<div class="t" style="left:830px;top:106px;width:82px;text-align:right;font-size:13px;letter-spacing:0.6px;color:#222;line-height:15px;padding-right:4px">K5</div>
<div class="t" style="left:0px;top:132px;width:82px;text-align:right;font-size:13px;letter-spacing:0.6px;color:#222;line-height:15px;padding-right:4px">A6</div>
<div class="t" style="left:83px;top:132px;width:82px;text-align:right;font-size:13px;letter-spacing:0.6px;color:#222;line-height:15px;padding-right:4px">B6</div>
<div class="t" style="left:166px;top:132px;width:82px;text-align:right;font-size:13px;letter-spacing:0.6px;color:#222;line-height:15px;padding-right:4px">C6</div>
<div class="t" style="left:249px;top:132px;width:82px;text-align:right;font-size:13px;letter-spacing:0.6px;color:#222;line-height:15px;padding-right:4px">D6</div>
<div class="t" style="left:332px;top:132px;width:82px;text-align:right;font-size:13px;letter-spacing:0.6px;color:#222;line-height:15px;padding-right:4px">E6</div>
<div class="t" style="left:415px;top:132px;width:82px;text-align:right;font-size:13px;letter-spacing:0.6px;color:#222;line-height:15px;padding-right:4px">F6</div>
<div class="t" style="left:498px;top:132px;width:82px;text-align:right;font-size:13px;letter-spacing:0.6px;color:#222;line-height:15px;padding-right:4px">G6</div>
<div class="t" style="left:581px;top:132px;width:82px;text-align:right;font-size:13px;letter-spacing:0.6px;color:#222;line-height:15px;padding-right:4px">H6</div>
<div class="t" style="left:664px;top:132px;width:82px;text-align:right;font-size:13px;letter-spacing:0.6px;color:#222;line-height:15px;padding-right:4px">I6</div>
<div class="t" style="left:747px;top:132px;width:82px;text-align:right;font-size:13px;letter-spacing:0.6px;color:#222;line-height:15px;padding-right:4px">J6</div>
<div class="t" style="left:830px;top:132px;width:82px;text-align:right;font-size:13px;letter-spacing:0.6px;color:#222;line-height:15px;padding-right:4px">K6</div>
<div class="t" style="left:0px;top:158px;width:82px;text-align:right;font-size:13px;letter-spacing:0.6px;color:#222;line-height:15px;padding-right:4px">A7</div>
<div class="t" style="left:83px;top:158px;width:82px;text-align:right;font-size:13px;letter-spacing:0.6px;color:#222;line-height:15px;padding-right:4px">B7</div>
<div class="t" style="left:166px;top:158px;width:82px;text-align:right;font-size:13px;letter-spacing:0.6px;color:#222;line-height:15px;padding-right:4px">C7</div>
<div class="t" style="left:249px;top:158px;width:82px;text-align:right;font-size:13px;letter-spacing:0.6px;color:#222;line-height:15px;padding-right:4px">D7</div>
<div class="t" style="left:332px;top:158px;width:82px;text-align:right;font-size:13px;letter-spacing:0.6px;color:#222;line-height:15px;padding-right:4px">E7</div>
<div class="t" style="left:415px;top:158px;width:82px;text-align:right;font-size:13px;letter-spacing:0.6px;color:#222;line-height:15px;padding-right:4px">F7</div>
<div class="t" style="left:498px;top:158px;width:82px;text-align:right;font-size:13px;letter-spacing:0.6px;color:#222;line-height:15px;padding-right:4px">G7</div>
<div class="t" style="left:581px;top:158px;width:82px;text-align:right;font-size:13px;letter-spacing:0.6px;color:#222;line-height:15px;padding-right:4px">H7</div>
<div class="t" style="left:664px;top:158px;width:82px;text-align:right;font-size:13px;letter-spacing:0.6px;color:#222;line-height:15px;padding-right:4px">I7</div>
<div class="t" style="left:747px;top:158px;width:82px;text-align:right;font-size:13px;letter-spacing:0.6px;color:#222;line-height:15px;padding-right:4px">J7</div>
<div class="t" style="left:830px;top:158px;width:82px;text-align:right;font-size:13px;letter-spacing:0.6px;color:#222;line-height:15px;padding-right:4px">K7</div>
<div class="t" style="left:0px;top:184px;width:82px;text-align:right;font-size:13px;letter-spacing:0.6px;color:#222;line-height:15px;padding-right:4px">A8</div>
<div class="t" style="left:83px;top:184px;width:82px;text-align:right;font-size:13px;letter-spacing:0.6px;color:#222;line-height:15px;padding-right:4px">B8</div>
<div class="t" style="left:166px;top:184px;width:82px;text-align:right;font-size:13px;letter-spacing:0.6px;color:#222;line-height:15px;padding-right:4px">C8</div>
<div class="t" style="left:249px;top:184px;width:82px;text-align:right;font-size:13px;letter-spacing:0.6px;color:#222;line-height:15px;padding-right:4px">D8</div>
<div class="t" style="left:332px;top:184px;width:82px;text-align:right;font-size:13px;letter-spacing:0.6px;color:#222;line-height:15px;padding-right:4px">E8</div>
<div class="t" style="left:415px;top:184px;width:82px;text-align:right;font-size:13px;letter-spacing:0.6px;color:#222;line-height:15px;padding-right:4px">F8</div>
<div class="t" style="left:498px;top:184px;width:82px;text-align:right;font-size:13px;letter-spacing:0.6px;color:#222;line-height:15px;padding-right:4px">G8</div>
<div class="t" style="left:581px;top:184px;width:82px;text-align:right;font-size:13px;letter-spacing:0.6px;color:#222;line-height:15px;padding-right:4px">H8</div>
<div class="t" style="left:664px;top:184px;width:82px;text-align:right;font-size:13px;letter-spacing:0.6px;color:#222;line-height:15px;padding-right:4px">I8</div>
<div class="t" style="left:747px;top:184px;width:82px;text-align:right;font-size:13px;letter-spacing:0.6px;color:#222;line-height:15px;padding-right:4px">J8</div>
<div class="t" style="left:830px;top:184px;width:82px;text-align:right;font-size:13px;letter-spacing:0.6px;color:#222;line-height:15px;padding-right:4px">K8</div>
<div class="t" style="left:0px;top:210px;width:82px;text-align:right;font-size:13px;letter-spacing:0.6px;color:#222;line-height:15px;padding-right:4px">A9</div>
<div class="t" style="left:83px;top:210px;width:82px;text-align:right;font-size:13px;letter-spacing:0.6px;color:#222;line-height:15px;padding-right:4px">B9</div>
<div class="t" style="left:166px;top:210px;width:82px;text-align:right;font-size:13px;letter-spacing:0.6px;color:#222;line-height:15px;padding-right:4px">C9</div>
<div class="t" style="left:249px;top:210px;width:82px;text-align:right;font-size:13px;letter-spacing:0.6px;color:#222;line-height:15px;padding-right:4px">D9</div>
<div class="t" style="left:332px;top:210px;width:82px;text-align:right;font-size:13px;letter-spacing:0.6px;color:#222;line-height:15px;padding-right:4px">E9</div>
<div class="t" style="left:415px;top:210px;width:82px;text-align:right;font-size:13px;letter-spacing:0.6px;color:#222;line-height:15px;padding-right:4px">F9</div>
<div class="t" style="left:498px;top:210px;width:82px;text-align:right;font-size:13px;letter-spacing:0.6px;color:#222;line-height:15px;padding-right:4px">G9</div>
<div class="t" style="left:581px;top:210px;width:82px;text-align:right;font-size:13px;letter-spacing:0.6px;color:#222;line-height:15px;padding-right:4px">H9</div>
<div class="t" style="left:664px;top:210px;width:82px;text-align:right;font-size:13px;letter-spacing:0.6px;color:#222;line-height:15px;padding-right:4px">I9</div>
<div class="t" style="left:747px;top:210px;width:82px;text-align:right;font-size:13px;letter-spacing:0.6px;color:#222;line-height:15px;padding-right:4px">J9</div>
<div class="t" style="left:830px;top:210px;width:82px;text-align:right;font-size:13px;letter-spacing:0.6px;color:#222;line-height:15px;padding-right:4px">K9</div>
<div class="t" style="left:0px;top:236px;width:82px;text-align:right;font-size:13px;letter-spacing:0.6px;color:#222;line-height:15px;padding-right:4px">A10</div>
<div class="t" style="left:83px;top:236px;width:82px;text-align:right;font-size:13px;letter-spacing:0.6px;color:#222;line-height:15px;padding-right:4px">B10</div>
<div class="t" style="left:166px;top:236px;width:82px;text-align:right;font-size:13px;letter-spacing:0.6px;color:#222;line-height:15px;padding-right:4px">C10</div>
<div class="t" style="left:249px;top:236px;width:82px;text-align:right;font-size:13px;letter-spacing:0.6px;color:#222;line-height:15px;padding-right:4px">D10</div>
<div class="t" style="left:332px;top:236px;width:82px;text-align:right;font-size:13px;letter-spacing:0.6px;color:#222;line-height:15px;padding-right:4px">E10</div>
<div class="t" style="left:415px;top:236px;width:82px;text-align:right;font-size:13px;letter-spacing:0.6px;color:#222;line-height:15px;padding-right:4px">F10</div>
<div class="t" style="left:498px;top:236px;width:82px;text-align:right;font-size:13px;letter-spacing:0.6px;color:#222;line-height:15px;padding-right:4px">G10</div>
<div class="t" style="left:581px;top:236px;width:82px;text-align:right;font-size:13px;letter-spacing:0.6px;color:#222;line-height:15px;padding-right:4px">H10</div>
<div class="t" style="left:664px;top:236px;width:82px;text-align:right;font-size:13px;letter-spacing:0.6px;color:#222;line-height:15px;padding-right:4px">I10</div>
<div class="t" style="left:747px;top:236px;width:82px;text-align:right;font-size:13px;letter-spacing:0.6px;color:#222;line-height:15px;padding-right:4px">J10</div>
<div class="t" style="left:830px;top:236px;width:82px;text-align:right;font-size:13px;letter-spacing:0.6px;color:#222;line-height:15px;padding-right:4px">K10</div>
<div class="t" style="left:0px;top:262px;width:82px;text-align:right;font-size:13px;letter-spacing:0.6px;color:#222;line-height:15px;padding-right:4px">A11</div>
<div class="t" style="left:83px;top:262px;width:82px;text-align:right;font-size:13px;letter-spacing:0.6px;color:#222;line-height:15px;padding-right:4px">B11</div>
<div class="t" style="left:166px;top:262px;width:82px;text-align:right;font-size:13px;letter-spacing:0.6px;color:#222;line-height:15px;padding-right:4px">C11</div>
<div class="t" style="left:249px;top:262px;width:82px;text-align:right;font-size:13px;letter-spacing:0.6px;color:#222;line-height:15px;padding-right:4px">D11</div>
<div class="t" style="left:332px;top:262px;width:82px;text-align:right;font-size:13px;letter-spacing:0.6px;color:#222;line-height:15px;padding-right:4px">E11</div>
<div class="t" style="left:415px;top:262px;width:82px;text-align:right;font-size:13px;letter-spacing:0.6px;color:#222;line-height:15px;padding-right:4px">F11</div>
<div class="t" style="left:498px;top:262px;width:82px;text-align:right;font-size:13px;letter-spacing:0.6px;color:#222;line-height:15px;padding-right:4px">G11</div>
<div class="t" style="left:581px;top:262px;width:82px;text-align:right;font-size:13px;letter-spacing:0.6px;color:#222;line-height:15px;padding-right:4px">H11</div>
<div class="t" style="left:664px;top:262px;width:82px;text-align:right;font-size:13px;letter-spacing:0.6px;color:#222;line-height:15px;padding-right:4px">I11</div>
<div class="t" style="left:747px;top:262px;width:82px;text-align:right;font-size:13px;letter-spacing:0.6px;color:#222;line-height:15px;padding-right:4px">J11</div>
<div class="t" style="left:830px;top:262px;width:82px;text-align:right;font-size:13px;letter-spacing:0.6px;color:#222;line-height:15px;padding-right:4px">K11</div>
<div class="t" style="left:0px;top:288px;width:82px;text-align:right;font-size:13px;letter-spacing:0.6px;color:#222;line-height:15px;padding-right:4px">A12</div>
<div class="t" style="left:83px;top:288px;width:82px;text-align:right;font-size:13px;letter-spacing:0.6px;color:#222;line-height:15px;padding-right:4px">B12</div>
<div class="t" style="left:166px;top:288px;width:82px;text-align:right;font-size:13px;letter-spacing:0.6px;color:#222;line-height:15px;padding-right:4px">C12</div>
<div class="t" style="left:249px;top:288px;width:82px;text-align:right;font-size:13px;letter-spacing:0.6px;color:#222;line-height:15px;padding-right:4px">D12</div>
<div class="t" style="left:332px;top:288px;width:82px;text-align:right;font-size:13px;letter-spacing:0.6px;color:#222;line-height:15px;padding-right:4px">E12</div>
<div class="t" style="left:415px;top:288px;width:82px;text-align:right;font-size:13px;letter-spacing:0.6px;color:#222;line-height:15px;padding-right:4px">F12</div>
<div class="t" style="left:498px;top:288px;width:82px;text-align:right;font-size:13px;letter-spacing:0.6px;color:#222;line-height:15px;padding-right:4px">G12</div>
<div class="t" style="left:581px;top:288px;width:82px;text-align:right;font-size:13px;letter-spacing:0.6px;color:#222;line-height:15px;padding-right:4px">H12</div>
<div class="t" style="left:664px;top:288px;width:82px;text-align:right;font-size:13px;letter-spacing:0.6px;color:#222;line-height:15px;padding-right:4px">I12</div>
<div class="t" style="left:747px;top:288px;width:82px;text-align:right;font-size:13px;letter-spacing:0.6px;color:#222;line-height:15px;padding-right:4px">J12</div>
<div class="t" style="left:830px;top:288px;width:82px;text-align:right;font-size:13px;letter-spacing:0.6px;color:#222;line-height:15px;padding-right:4px">K12</div>
<div class="t" style="left:0px;top:314px;width:82px;text-align:right;font-size:13px;letter-spacing:0.6px;color:#222;line-height:15px;padding-right:4px">A13</div>
<div class="t" style="left:83px;top:314px;width:82px;text-align:right;font-size:13px;letter-spacing:0.6px;color:#222;line-height:15px;padding-right:4px">B13</div>
<div class="t" style="left:166px;top:314px;width:82px;text-align:right;font-size:13px;letter-spacing:0.6px;color:#222;line-height:15px;padding-right:4px">C13</div>
<div class="t" style="left:249px;top:314px;width:82px;text-align:right;font-size:13px;letter-spacing:0.6px;color:#222;line-height:15px;padding-right:4px">D13</div>
<div class="t" style="left:332px;top:314px;width:82px;text-align:right;font-size:13px;letter-spacing:0.6px;color:#222;line-height:15px;padding-right:4px">E13</div>
<div class="t" style="left:415px;top:314px;width:82px;text-align:right;font-size:13px;letter-spacing:0.6px;color:#222;line-height:15px;padding-right:4px">F13</div>
<div class="t" style="left:498px;top:314px;width:82px;text-align:right;font-size:13px;letter-spacing:0.6px;color:#222;line-height:15px;padding-right:4px">G13</div>
<div class="t" style="left:581px;top:314px;width:82px;text-align:right;font-size:13px;letter-spacing:0.6px;color:#222;line-height:15px;padding-right:4px">H13</div>
<div class="t" style="left:664px;top:314px;width:82px;text-align:right;font-size:13px;letter-spacing:0.6px;color:#222;line-height:15px;padding-right:4px">I13</div>
<div class="t" style="left:747px;top:314px;width:82px;text-align:right;font-size:13px;letter-spacing:0.6px;color:#222;line-height:15px;padding-right:4px">J13</div>
<div class="t" style="left:830px;top:314px;width:82px;text-align:right;font-size:13px;letter-spacing:0.6px;color:#222;line-height:15px;padding-right:4px">K13</div>
<div class="t" style="left:0px;top:340px;width:82px;text-align:right;font-size:13px;letter-spacing:0.6px;color:#222;line-height:15px;padding-right:4px">A14</div>
<div class="t" style="left:83px;top:340px;width:82px;text-align:right;font-size:13px;letter-spacing:0.6px;color:#222;line-height:15px;padding-right:4px">B14</div>
<div class="t" style="left:166px;top:340px;width:82px;text-align:right;font-size:13px;letter-spacing:0.6px;color:#222;line-height:15px;padding-right:4px">C14</div>
<div class="t" style="left:249px;top:340px;width:82px;text-align:right;font-size:13px;letter-spacing:0.6px;color:#222;line-height:15px;padding-right:4px">D14</div>
<div class="t" style="left:332px;top:340px;width:82px;text-align:right;font-size:13px;letter-spacing:0.6px;color:#222;line-height:15px;padding-right:4px">E14</div>
<div class="t" style="left:415px;top:340px;width:82px;text-align:right;font-size:13px;letter-spacing:0.6px;color:#222;line-height:15px;padding-right:4px">F14</div>
<div class="t" style="left:498px;top:340px;width:82px;text-align:right;font-size:13px;letter-spacing:0.6px;color:#222;line-height:15px;padding-right:4px">G14</div>
<div class="t" style="left:581px;top:340px;width:82px;text-align:right;font-size:13px;letter-spacing:0.6px;color:#222;line-height:15px;padding-right:4px">H14</div>
<div class="t" style="left:664px;top:340px;width:82px;text-align:right;font-size:13px;letter-spacing:0.6px;color:#222;line-height:15px;padding-right:4px">I14</div>
<div class="t" style="left:747px;top:340px;width:82px;text-align:right;font-size:13px;letter-spacing:0.6px;color:#222;line-height:15px;padding-right:4px">J14</div>
<div class="t" style="left:830px;top:340px;width:82px;text-align:right;font-size:13px;letter-spacing:0.6px;color:#222;line-height:15px;padding-right:4px">K14</div>
<div class="t" style="left:0px;top:366px;width:82px;text-align:right;font-size:13px;letter-spacing:0.6px;color:#222;line-height:15px;padding-right:4px">A15</div>
<div class="t" style="left:83px;top:366px;width:82px;text-align:right;font-size:13px;letter-spacing:0.6px;color:#222;line-height:15px;padding-right:4px">B15</div>
<div class="t" style="left:166px;top:366px;width:82px;text-align:right;font-size:13px;letter-spacing:0.6px;color:#222;line-height:15px;padding-right:4px">C15</div>
<div class="t" style="left:249px;top:366px;width:82px;text-align:right;font-size:13px;letter-spacing:0.6px;color:#222;line-height:15px;padding-right:4px">D15</div>
<div class="t" style="left:332px;top:366px;width:82px;text-align:right;font-size:13px;letter-spacing:0.6px;color:#222;line-height:15px;padding-right:4px">E15</div>
<div class="t" style="left:415px;top:366px;width:82px;text-align:right;font-size:13px;letter-spacing:0.6px;color:#222;line-height:15px;padding-right:4px">F15</div>
<div class="t" style="left:498px;top:366px;width:82px;text-align:right;font-size:13px;letter-spacing:0.6px;color:#222;line-height:15px;padding-right:4px">G15</div>
<div class="t" style="left:581px;top:366px;width:82px;text-align:right;font-size:13px;letter-spacing:0.6px;color:#222;line-height:15px;padding-right:4px">H15</div>
<div class="t" style="left:664px;top:366px;width:82px;text-align:right;font-size:13px;letter-spacing:0.6px;color:#222;line-height:15px;padding-right:4px">I15</div>
<div class="t" style="left:747px;top:366px;width:82px;text-align:right;font-size:13px;letter-spacing:0.6px;color:#222;line-height:15px;padding-right:4px">J15</div>
<div class="t" style="left:830px;top:366px;width:82px;text-align:right;font-size:13px;letter-spacing:0.6px;color:#222;line-height:15px;padding-right:4px">K15</div>
<div class="t" style="left:0px;top:392px;width:82px;text-align:right;font-family:'Liberation Serif',serif;font-size:14px !important;margin-left:0.5px;font-size:13px;letter-spacing:0.6px;color:#222;line-height:15px;padding-right:4px">A16</div>
<div class="t" style="left:83px;top:392px;width:82px;text-align:right;font-family:'Liberation Serif',serif;font-size:14px !important;margin-left:0.5px;font-size:13px;letter-spacing:0.6px;color:#222;line-height:15px;padding-right:4px">B16</div>
<div class="t" style="left:166px;top:392px;width:82px;text-align:right;font-family:'Liberation Serif',serif;font-size:14px !important;margin-left:0.5px;font-size:13px;letter-spacing:0.6px;color:#222;line-height:15px;padding-right:4px">C16</div>
<div class="t" style="left:249px;top:392px;width:82px;text-align:right;font-family:'Liberation Serif',serif;font-size:14px !important;margin-left:0.5px;font-size:13px;letter-spacing:0.6px;color:#222;line-height:15px;padding-right:4px">D16</div>
<div class="t" style="left:332px;top:392px;width:82px;text-align:right;font-family:'Liberation Serif',serif;font-size:14px !important;margin-left:0.5px;font-size:13px;letter-spacing:0.6px;color:#222;line-height:15px;padding-right:4px">E16</div>
<div class="t" style="left:415px;top:392px;width:82px;text-align:right;font-family:'Liberation Serif',serif;font-size:14px !important;margin-left:0.5px;font-size:13px;letter-spacing:0.6px;color:#222;line-height:15px;padding-right:4px">F16</div>
<div class="t" style="left:498px;top:392px;width:82px;text-align:right;font-family:'Liberation Serif',serif;font-size:14px !important;margin-left:0.5px;font-size:13px;letter-spacing:0.6px;color:#222;line-height:15px;padding-right:4px">G16</div>
<div class="t" style="left:581px;top:392px;width:82px;text-align:right;font-family:'Liberation Serif',serif;font-size:14px !important;margin-left:0.5px;font-size:13px;letter-spacing:0.6px;color:#222;line-height:15px;padding-right:4px">H16</div>
<div class="t" style="left:664px;top:392px;width:82px;text-align:right;font-family:'Liberation Serif',serif;font-size:14px !important;margin-left:0.5px;font-size:13px;letter-spacing:0.6px;color:#222;line-height:15px;padding-right:4px">I16</div>
<div class="t" style="left:747px;top:392px;width:82px;text-align:right;font-family:'Liberation Serif',serif;font-size:14px !important;margin-left:0.5px;font-size:13px;letter-spacing:0.6px;color:#222;line-height:15px;padding-right:4px">J16</div>
<div class="t" style="left:830px;top:392px;width:82px;text-align:right;font-family:'Liberation Serif',serif;font-size:14px !important;margin-left:0.5px;font-size:13px;letter-spacing:0.6px;color:#222;line-height:15px;padding-right:4px">K16</div>
</div>
<div style="position:absolute;left:1145px;top:241px;width:16px;height:405px;background:#eeeeee;border:1px solid #8fa4bd"></div>
<div style="position:absolute;left:1146px;top:242px;width:14px;height:14px;background:#f4f4f4;border-bottom:1px solid #b8c4d2"></div>
<svg style="position:absolute;left:1149px;top:246px" width="9" height="5"><path d="M0 5 L9 5 L4.5 0 Z" fill="#222"/></svg>
<div style="position:absolute;left:1145px;top:256px;width:16px;height:114px;background:#a3b8cf;border:1px solid #6f90c8"></div>
<div style="position:absolute;left:1149px;top:311px;width:8px;height:1px;background:#fff"></div>
<div style="position:absolute;left:1149px;top:313px;width:8px;height:1px;background:#fff"></div>
<div style="position:absolute;left:1149px;top:315px;width:8px;height:1px;background:#fff"></div>
<div style="position:absolute;left:1146px;top:630px;width:14px;height:15px;background:#f4f4f4;border-top:1px solid #b8c4d2"></div>
<svg style="position:absolute;left:1149px;top:636px" width="9" height="5"><path d="M0 0 L9 0 L4.5 5 Z" fill="#222"/></svg>
<div style="position:absolute;left:254px;top:647px;width:891px;height:16px;background:#eeeeee;border:1px solid #8fa4bd"></div>
<div style="position:absolute;left:255px;top:648px;width:14px;height:14px;background:#f4f4f4;border-right:1px solid #b8c4d2"></div>
<svg style="position:absolute;left:259px;top:651px" width="5" height="9"><path d="M5 0 L5 9 L0 4.5 Z" fill="#222"/></svg>
<div style="position:absolute;left:269px;top:647px;width:710px;height:16px;background:#a3b8cf;border:1px solid #6f90c8"></div>
<div style="position:absolute;left:622px;top:651px;width:1px;height:8px;background:#fff"></div>
<div style="position:absolute;left:624px;top:651px;width:1px;height:8px;background:#fff"></div>
<div style="position:absolute;left:626px;top:651px;width:1px;height:8px;background:#fff"></div>
<div style="position:absolute;left:1128px;top:648px;width:16px;height:14px;background:#f4f4f4;border-left:1px solid #b8c4d2"></div>
<svg style="position:absolute;left:1134px;top:651px" width="5" height="9"><path d="M0 0 L0 9 L5 4.5 Z" fill="#222"/></svg>
<div style="position:absolute;left:1166px;top:104px;width:5px;height:11px;background:#cfdcec"></div>
<svg style="position:absolute;left:1166px;top:104px" width="5" height="10"><path d="M5 0 L5 10 L0 5 Z" fill="#000"/></svg>
<div style="position:absolute;left:1166px;top:116px;width:5px;height:11px;background:#cfdcec"></div>
<svg style="position:absolute;left:1166px;top:116px" width="5" height="10"><path d="M0 0 L0 10 L5 5 Z" fill="#000"/></svg>
<div style="position:absolute;left:1171px;top:102px;width:254px;height:572px;background:#f0f0f0;border:1px solid #bdbdbd"></div>
<div style="position:absolute;left:1172px;top:103px;width:252px;height:25px;background:#0d4571"></div>
<div style="position:absolute;left:1172px;top:128px;width:252px;height:1px;background:#a39c94"></div>
<div class="t" style="left:1172px;top:109px;width:252px;text-align:center;font-size:12px;font-weight:bold;color:#fff;line-height:14px">Business Units</div>
<div style="position:absolute;left:1172px;top:129px;width:252px;height:23px;background:#0d4571"></div>
<div style="position:absolute;left:1172px;top:152px;width:252px;height:1px;background:#a39c94"></div>
<div class="t" style="left:1172px;top:134px;width:252px;text-align:center;font-size:12px;font-weight:bold;color:#fff;line-height:14px">Accounts</div>
<div style="position:absolute;left:1172px;top:314px;width:252px;height:24px;background:#0d4571"></div>
<div style="position:absolute;left:1172px;top:338px;width:252px;height:1px;background:#a39c94"></div>
<div class="t" style="left:1172px;top:319px;width:252px;text-align:center;font-size:12px;font-weight:bold;color:#fff;line-height:14px">Ledger Type</div>
<div style="position:absolute;left:1172px;top:339px;width:252px;height:24px;background:#0d4571"></div>
<div style="position:absolute;left:1172px;top:363px;width:252px;height:1px;background:#a39c94"></div>
<div class="t" style="left:1172px;top:344px;width:252px;text-align:center;font-size:12px;font-weight:bold;color:#fff;line-height:14px">Fiscal Year</div>
<div style="position:absolute;left:1172px;top:364px;width:252px;height:24px;background:#0d4571"></div>
<div style="position:absolute;left:1172px;top:388px;width:252px;height:1px;background:#a39c94"></div>
<div class="t" style="left:1172px;top:369px;width:252px;text-align:center;font-size:12px;font-weight:bold;color:#fff;line-height:14px">Company</div>
<div style="position:absolute;left:1172px;top:389px;width:252px;height:24px;background:#0d4571"></div>
<div style="position:absolute;left:1172px;top:413px;width:252px;height:1px;background:#a39c94"></div>
<div class="t" style="left:1172px;top:394px;width:252px;text-align:center;font-size:12px;font-weight:bold;color:#fff;line-height:14px">Subledger</div>
<div style="position:absolute;left:1172px;top:414px;width:252px;height:23px;background:#0d4571"></div>
<div style="position:absolute;left:1172px;top:437px;width:252px;height:1px;background:#a39c94"></div>
<div class="t" style="left:1172px;top:419px;width:252px;text-align:center;font-size:12px;font-weight:bold;color:#fff;line-height:14px">Periods</div>
<div style="position:absolute;left:1172px;top:313px;width:252px;height:1px;background:#a39c94"></div>
<svg style="position:absolute;left:0;top:0" width="1427" height="320" viewBox="0 0 1427 320"><defs><radialGradient id="hg" cx="0.5" cy="0.4" r="0.6"><stop offset="0" stop-color="#ffffff"/><stop offset="1" stop-color="#7fa2da"/></radialGradient></defs><path d="M1185 161.5 L1192 161.5 M1199.5 169 L1199.5 172 M1204 176.5 L1212 176.5 M1220.5 184 L1220.5 187 M1224 192.5 L1232 192.5 M1240 200 L1240 256 M1248 208.5 L1252 208.5 M1248 224.5 L1252 224.5 M1248 240.5 L1252 240.5 M1248 256.5 L1252 256.5 M1219.5 200 L1219.5 304 M1228 272.5 L1232 272.5 M1228 288.5 L1232 288.5 M1228 304.5 L1232 304.5" stroke="#c4c4c4" stroke-width="1"/><circle cx="1180" cy="160" r="3.6" fill="url(#hg)" stroke="#111" stroke-width="1.1"/><rect x="1179" y="159" width="2" height="2" fill="#111"/><rect x="1179" y="164" width="2" height="4.5" fill="#111"/><path d="M1194.5 167 L1194.5 155.5 M1194.5 167 L1206 167 M1194.5 167 L1203.5 158" stroke="#4a7bd0" stroke-width="1.4" fill="none"/><path d="M1192 157 L1194.5 153.5 L1197 157 Z M1205 164.5 L1208.3 167 L1205 169.5 Z M1201 157 L1204.8 156.2 L1204 160 Z" fill="#4a7bd0"/><circle cx="1200" cy="176" r="3.6" fill="url(#hg)" stroke="#111" stroke-width="1.1"/><rect x="1199" y="175" width="2" height="2" fill="#111"/><rect x="1199" y="180" width="2" height="4.5" fill="#111"/><path d="M1212 172.8 Q1212 171.8 1213 171.8 L1217.5 171.8 L1218.5 173.10000000000002 L1225 173.10000000000002 L1225 175.8 L1215.8 175.8 L1213.3 182.8 L1212 182.8 Z" fill="#0e4a7c"/><path d="M1212.6 182.60000000000002 L1215.5 176.0 L1227.3 176.0 L1224.6 182.60000000000002 Z" fill="#fff" stroke="#0e4a7c" stroke-width="1.3"/><circle cx="1220" cy="192" r="3.6" fill="url(#hg)" stroke="#111" stroke-width="1.1"/><rect x="1219" y="191" width="2" height="2" fill="#111"/><rect x="1219" y="196" width="2" height="4.5" fill="#111"/><path d="M1232 188.5 Q1232 187.5 1233 187.5 L1237.5 187.5 L1238.5 188.8 L1245 188.8 L1245 191.5 L1235.8 191.5 L1233.3 198.5 L1232 198.5 Z" fill="#0e4a7c"/><path d="M1232.6 198.3 L1235.5 191.7 L1247.3 191.7 L1244.6 198.3 Z" fill="#0e4a7c" stroke="#0e4a7c" stroke-width="1.3"/><path d="M1234.5 197.5 L1236.8 193 L1245.5 193 L1243.5 197.5 Z" fill="#fff"/><circle cx="1239.8" cy="195.2" r="2.4" fill="#0e4a7c"/><circle cx="1240" cy="208" r="3.6" fill="url(#hg)" stroke="#111" stroke-width="1.1"/><rect x="1239" y="207" width="2" height="2" fill="#111"/><rect x="1244" y="207" width="4" height="2" fill="#111"/><path d="M1252.6 215.5 L1252.6 203 L1258 203 L1259 204.3 L1267.4 204.3 L1267.4 215.5 L1252.6 215.5 Z" fill="#fff" stroke="#0e4a7c" stroke-width="1.3"/><rect x="1252" y="202.5" width="6.5" height="2.5" fill="#0e4a7c"/><circle cx="1240" cy="224" r="3.6" fill="url(#hg)" stroke="#111" stroke-width="1.1"/><rect x="1239" y="223" width="2" height="2" fill="#111"/><rect x="1244" y="223" width="4" height="2" fill="#111"/><path d="M1252.6 231.5 L1252.6 219 L1258 219 L1259 220.3 L1267.4 220.3 L1267.4 231.5 L1252.6 231.5 Z" fill="#fff" stroke="#0e4a7c" stroke-width="1.3"/><rect x="1252" y="218.5" width="6.5" height="2.5" fill="#0e4a7c"/><circle cx="1240" cy="240" r="3.6" fill="url(#hg)" stroke="#111" stroke-width="1.1"/><rect x="1239" y="239" width="2" height="2" fill="#111"/><rect x="1244" y="239" width="4" height="2" fill="#111"/><path d="M1252.6 247.5 L1252.6 235 L1258 235 L1259 236.3 L1267.4 236.3 L1267.4 247.5 L1252.6 247.5 Z" fill="#fff" stroke="#0e4a7c" stroke-width="1.3"/><rect x="1252" y="234.5" width="6.5" height="2.5" fill="#0e4a7c"/><circle cx="1240" cy="256" r="3.6" fill="url(#hg)" stroke="#111" stroke-width="1.1"/><rect x="1239" y="255" width="2" height="2" fill="#111"/><rect x="1244" y="255" width="4" height="2" fill="#111"/><path d="M1252.6 263.5 L1252.6 251 L1258 251 L1259 252.3 L1267.4 252.3 L1267.4 263.5 L1252.6 263.5 Z" fill="#fff" stroke="#0e4a7c" stroke-width="1.3"/><rect x="1252" y="250.5" width="6.5" height="2.5" fill="#0e4a7c"/><circle cx="1220" cy="272" r="3.6" fill="url(#hg)" stroke="#111" stroke-width="1.1"/><rect x="1219" y="271" width="2" height="2" fill="#111"/><rect x="1224" y="271" width="4" height="2" fill="#111"/><path d="M1232.6 279.5 L1232.6 267 L1238 267 L1239 268.3 L1247.4 268.3 L1247.4 279.5 L1232.6 279.5 Z" fill="#fff" stroke="#0e4a7c" stroke-width="1.3"/><rect x="1232" y="266.5" width="6.5" height="2.5" fill="#0e4a7c"/><circle cx="1220" cy="288" r="3.6" fill="url(#hg)" stroke="#111" stroke-width="1.1"/><rect x="1219" y="287" width="2" height="2" fill="#111"/><rect x="1224" y="287" width="4" height="2" fill="#111"/><path d="M1232.6 295.5 L1232.6 283 L1238 283 L1239 284.3 L1247.4 284.3 L1247.4 295.5 L1232.6 295.5 Z" fill="#fff" stroke="#0e4a7c" stroke-width="1.3"/><rect x="1232" y="282.5" width="6.5" height="2.5" fill="#0e4a7c"/><circle cx="1220" cy="304" r="3.6" fill="url(#hg)" stroke="#111" stroke-width="1.1"/><rect x="1219" y="303" width="2" height="2" fill="#111"/><rect x="1224" y="303" width="4" height="2" fill="#111"/><path d="M1232.6 311.5 L1232.6 299 L1238 299 L1239 300.3 L1247.4 300.3 L1247.4 311.5 L1232.6 311.5 Z" fill="#fff" stroke="#0e4a7c" stroke-width="1.3"/><rect x="1232" y="298.5" width="6.5" height="2.5" fill="#0e4a7c"/></svg>
<div class="t" style="left:1212px;top:155px;font-size:11px;font-weight:bold;letter-spacing:0.5px;color:#111;line-height:13px">Accounts</div>
<div class="t" style="left:1232px;top:171px;font-size:11px;color:#111;line-height:13px">Active (Active)</div>
<div class="t" style="left:1252px;top:187px;font-size:11px;color:#111;line-height:13px">Assets (1000.)</div>
<div class="t" style="left:1272px;top:203px;font-size:11px;color:#111;line-height:13px">Current Assets (1001.)</div>
<div class="t" style="left:1272px;top:219px;font-size:11px;color:#111;line-height:13px">Brazilian Landed Costs (1419.)</div>
<div class="t" style="left:1272px;top:235px;font-size:11px;color:#111;line-height:13px">Brazilian Taxes (1420.)</div>
<div class="t" style="left:1272px;top:251px;font-size:11px;color:#111;line-height:13px">Fixed Assets (2000.)</div>
<div class="t" style="left:1252px;top:267px;font-size:11px;color:#111;line-height:13px">Liabilities and Equity (4000.)</div>
<div class="t" style="left:1252px;top:283px;font-size:11px;color:#111;line-height:13px">Revenue (5000.)</div>
<div class="t" style="left:1252px;top:299px;font-size:11px;color:#111;line-height:13px">Cost of Sales (6000.)</div>
<div style="position:absolute;left:5px;top:674px;width:9px;height:5px;background:#cfdcec"></div>
<svg style="position:absolute;left:5px;top:674px" width="9" height="5"><path d="M0 5 L9 5 L4.5 0 Z" fill="#000"/></svg>
<div style="position:absolute;left:16px;top:674px;width:10px;height:5px;background:#cfdcec"></div>
<svg style="position:absolute;left:16px;top:674px" width="10" height="5"><path d="M0 0 L10 0 L5 5 Z" fill="#000"/></svg>
<div style="position:absolute;left:2px;top:679px;width:1423px;height:81px;border:1px solid #c4c4c4"></div>
<div style="position:absolute;left:14px;top:693px;width:88px;height:18px;background:#0d4571;box-shadow:0 0 0 1px #d4d4d4"></div>
<div class="t" style="left:17px;top:694px;font-size:11px;font-weight:bold;letter-spacing:0.15px;color:#fff;line-height:13px">Business Uni...</div>
<div style="position:absolute;left:14px;top:711px;width:88px;height:35px;background:#fff;border:3px solid #abc5e8;border-top-width:2px;box-shadow:0 0 0 1px #d4d4d4;height:34px"></div>
<div style="position:absolute;left:14px;top:711px;width:88px;height:1px;background:#c9c9c9"></div>
<div class="t" style="left:22px;top:713px;font-size:13px;letter-spacing:0.5px;color:#222;line-height:15px">Active</div>
<div style="position:absolute;left:114px;top:693px;width:88px;height:18px;background:#0d4571;box-shadow:0 0 0 1px #d4d4d4"></div>
<div class="t" style="left:114px;top:694px;width:88px;text-align:center;font-size:11px;font-weight:bold;letter-spacing:0.15px;color:#fff;line-height:13px">Ledger Type</div>
<div style="position:absolute;left:114px;top:711px;width:88px;height:35px;background:#fff;border:3px solid #abc5e8;border-top-width:2px;box-shadow:0 0 0 1px #d4d4d4;height:34px"></div>
<div style="position:absolute;left:114px;top:711px;width:88px;height:1px;background:#c9c9c9"></div>
<div class="t" style="left:122px;top:713px;font-size:13px;letter-spacing:0.5px;color:#222;line-height:15px">AA</div>
<div style="position:absolute;left:214px;top:693px;width:88px;height:18px;background:#0d4571;box-shadow:0 0 0 1px #d4d4d4"></div>
<div class="t" style="left:214px;top:694px;width:88px;text-align:center;font-size:11px;font-weight:bold;letter-spacing:0.15px;color:#fff;line-height:13px">Fiscal Year</div>
<div style="position:absolute;left:214px;top:711px;width:88px;height:35px;background:#fff;border:3px solid #abc5e8;border-top-width:2px;box-shadow:0 0 0 1px #d4d4d4;height:34px"></div>
<div style="position:absolute;left:214px;top:711px;width:88px;height:1px;background:#c9c9c9"></div>
<div class="t" style="left:222px;top:713px;font-size:13px;letter-spacing:0.5px;color:#222;line-height:15px"></div>
<div style="position:absolute;left:314px;top:693px;width:88px;height:18px;background:#0d4571;box-shadow:0 0 0 1px #d4d4d4"></div>
<div class="t" style="left:314px;top:694px;width:88px;text-align:center;font-size:11px;font-weight:bold;letter-spacing:0.15px;color:#fff;line-height:13px">Company</div>
<div style="position:absolute;left:314px;top:711px;width:88px;height:35px;background:#fff;border:3px solid #abc5e8;border-top-width:2px;box-shadow:0 0 0 1px #d4d4d4;height:34px"></div>
<div style="position:absolute;left:314px;top:711px;width:88px;height:1px;background:#c9c9c9"></div>
<div class="t" style="left:322px;top:713px;font-size:13px;letter-spacing:0.5px;color:#222;line-height:15px">Active</div>
<div style="position:absolute;left:414px;top:693px;width:88px;height:18px;background:#0d4571;box-shadow:0 0 0 1px #d4d4d4"></div>
<div class="t" style="left:414px;top:694px;width:88px;text-align:center;font-size:11px;font-weight:bold;letter-spacing:0.15px;color:#fff;line-height:13px">Subledger</div>
<div style="position:absolute;left:414px;top:711px;width:88px;height:35px;background:#fff;border:3px solid #abc5e8;border-top-width:2px;box-shadow:0 0 0 1px #d4d4d4;height:34px"></div>
<div style="position:absolute;left:414px;top:711px;width:88px;height:1px;background:#c9c9c9"></div>
<div class="t" style="left:422px;top:713px;font-size:13px;letter-spacing:0.5px;color:#222;line-height:15px">Active</div>
<div class="t" style="left:4px;top:772px;font-size:12px;font-weight:bold;letter-spacing:-0.08px;color:#222;line-height:14px">You are now designing: 2. PL Trend (89)</div>
<div style="left:1300px;top:773px;width:10px;height:10px;border-radius:50%;background:#00e000"></div>
<div class="t" style="left:1315px;top:772px;font-size:12px;font-weight:bold;letter-spacing:-0.15px;color:#222;line-height:14px">Logged In (admin)</div></body></html>
